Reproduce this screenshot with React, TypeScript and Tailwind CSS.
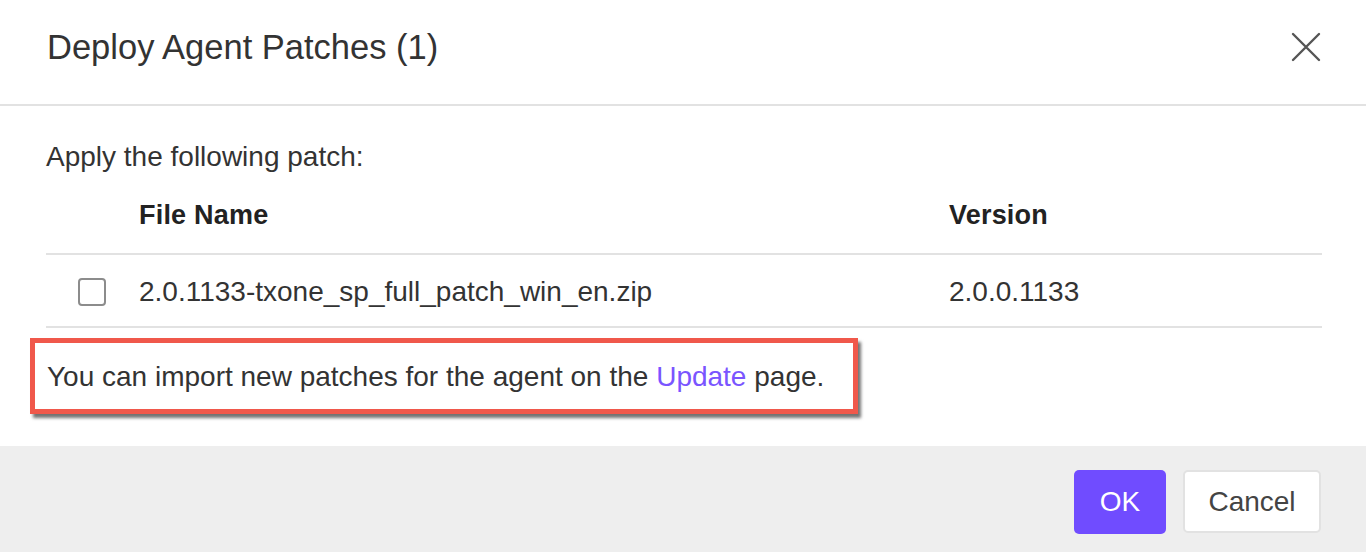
import React from "react";

export default function App() {
  return (
    <div className="w-[1366px] h-[552px] bg-white overflow-hidden flex flex-col text-[#333]" style={{ fontFamily: '"Liberation Sans", Arial, sans-serif' }}>
      <div className="h-[106px] flex items-center justify-between pl-[47px] pr-[44px] border-b-2 border-[#e2e2e2] shrink-0">
        <h1 className="text-[34.5px] leading-none text-[#333] pb-[10px]">Deploy Agent Patches (1)</h1>
        <button className="w-[32px] h-[32px] flex items-center justify-center mb-[10px]">
          <svg width="30" height="30" viewBox="0 0 30 30" fill="none" stroke="#555" strokeWidth="2.4" strokeLinecap="round">
            <path d="M2 2 L28 28 M28 2 L2 28" />
          </svg>
        </button>
      </div>
      <div className="flex-1 flex flex-col px-[44px] pl-[46px]">
        <p className="text-[28px] leading-[34px] mt-[34px]">Apply the following patch:</p>
        <div className="mt-[4px]">
          <div className="h-[77px] flex items-center border-b-2 border-[#e2e2e2]">
            <div className="w-[93px] shrink-0" />
            <div className="w-[810px] shrink-0 text-[27px] font-bold text-[#222] tracking-[0.2px]">File Name</div>
            <div className="text-[27px] font-bold text-[#222] tracking-[0.2px]">Version</div>
          </div>
          <div className="h-[73px] flex items-center border-b-2 border-[#e2e2e2] pt-[3px]">
            <div className="w-[93px] shrink-0 pl-[32px] flex items-center">
              <span className="block w-[28px] h-[28px] rounded-[4px] border-2 border-[#8c8c8c] bg-white" />
            </div>
            <div className="w-[810px] shrink-0 text-[28px] text-[#333]">2.0.1133-txone_sp_full_patch_win_en.zip</div>
            <div className="text-[28px] text-[#333]">2.0.0.1133</div>
          </div>
        </div>
        <div className="mt-[10px] ml-[-16px] w-[828px] h-[76px] border-[5px] border-[#f0584b] shadow-[3px_4px_3px_rgba(0,0,0,0.55)] flex items-center pl-[12px] pt-[2px]">
          <span className="text-[28px] text-[#333]">
            You can import new patches for the agent on the <span className="text-[#7a55ff]">Update</span> page.
          </span>
        </div>
      </div>
      <div className="h-[106px] bg-[#eeeeee] flex items-start justify-end gap-[17px] pr-[45px] pt-[24px] shrink-0">
        <button className="w-[92px] h-[64px] rounded-[5px] bg-[#704cff] text-white text-[28px]">OK</button>
        <button className="w-[138px] h-[63px] rounded-[5px] bg-white border-2 border-[#e2e2e2] text-[#444] text-[28px]">Cancel</button>
      </div>
    </div>
  );
}
